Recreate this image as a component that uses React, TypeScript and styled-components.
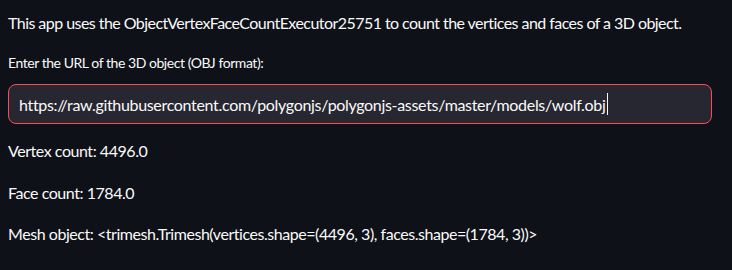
import React from 'react';
import styled, { createGlobalStyle } from 'styled-components';

const GlobalStyle = createGlobalStyle`
  html, body {
    margin: 0;
    padding: 0;
    background: #0e1117;
  }
  body {
    font-family: Lato, "Noto Sans", sans-serif;
    color: #fafafa;
  }
`;

const Page = styled.div`
  width: 732px;
  height: 270px;
  box-sizing: border-box;
  padding: 11px 20px 0 8px;
  background: #0e1117;
  display: flex;
  flex-direction: column;
`;

const Paragraph = styled.p<{ gap?: number; tight?: boolean }>`
  margin: 0 0 ${(p) => p.gap ?? 0}px 0;
  font-size: 16px;
  line-height: 24px;
  letter-spacing: ${(p) => (p.tight ? '-0.55px' : '-0.45px')};
  white-space: nowrap;
`;

const Label = styled.label`
  display: block;
  font-size: 14px;
  line-height: 20px;
  letter-spacing: -0.45px;
  margin-top: 18px;
  margin-bottom: 11px;
`;

const InputBox = styled.div`
  box-sizing: border-box;
  height: 40px;
  width: 704px;
  border: 1px solid #ff4b4b;
  border-radius: 8px;
  background: #262730;
  display: flex;
  align-items: center;
  padding: 0 10px;
  font-size: 16px;
  letter-spacing: -0.32px;
  white-space: nowrap;
  margin-bottom: 15px;
`;

const Caret = styled.span`
  display: inline-block;
  width: 1px;
  height: 22px;
  background: #fafafa;
  margin-left: 1px;
`;

export default function App() {
  return (
    <>
      <GlobalStyle />
      <Page>
        <Paragraph tight>
          This app uses the ObjectVertexFaceCountExecutor25751 to count the vertices and faces of a 3D object.
        </Paragraph>
        <Label>Enter the URL of the 3D object (OBJ format):</Label>
        <InputBox>
          https://raw.githubusercontent.com/polygonjs/polygonjs-assets/master/models/wolf.obj
          <Caret />
        </InputBox>
        <Paragraph gap={18}>Vertex count: 4496.0</Paragraph>
        <Paragraph gap={17}>Face count: 1784.0</Paragraph>
        <Paragraph>
          Mesh object: &lt;trimesh.Trimesh(vertices.shape=(4496, 3), faces.shape=(1784, 3))&gt;
        </Paragraph>
      </Page>
    </>
  );
}
